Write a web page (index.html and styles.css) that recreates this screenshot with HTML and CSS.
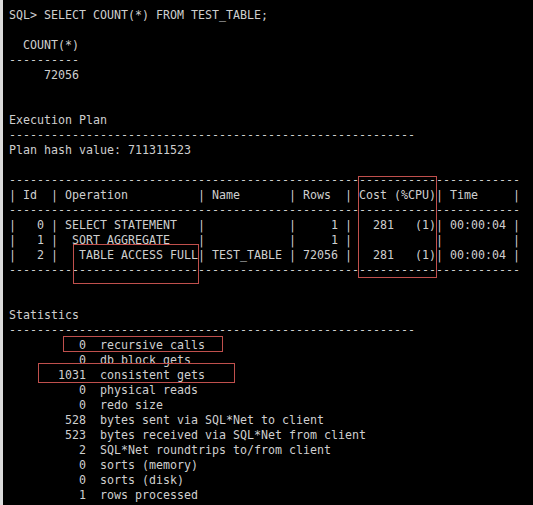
FILE: index.html
```html
<!DOCTYPE html>
<html>
<head>
<meta charset="utf-8">
<link rel="stylesheet" href="styles.css">
</head>
<body>
<div class="term">
<pre class="out">SQL&gt; SELECT COUNT(*) FROM TEST_TABLE;

  COUNT(*)
----------
     72056


Execution Plan
----------------------------------------------------------
Plan hash value: 711311523

-------------------------------------------------------------------------
| Id  | Operation          | Name       | Rows  | Cost (%CPU)| Time     |
-------------------------------------------------------------------------
|   0 | SELECT STATEMENT   |            |     1 |   281   (1)| 00:00:04 |
|   1 |  SORT AGGREGATE    |            |     1 |            |          |
|   2 |   TABLE ACCESS FULL| TEST_TABLE | 72056 |   281   (1)| 00:00:04 |
-------------------------------------------------------------------------


Statistics
----------------------------------------------------------
          0  recursive calls
          0  db block gets
       1031  consistent gets
          0  physical reads
          0  redo size
        528  bytes sent via SQL*Net to client
        523  bytes received via SQL*Net from client
          2  SQL*Net roundtrips to/from client
          0  sorts (memory)
          0  sorts (disk)
          1  rows processed</pre>
<div class="mark mark-full"></div>
<div class="mark mark-cost"></div>
<div class="mark mark-rec"></div>
<div class="mark mark-cons"></div>
</div>
</body>
</html>
```
FILE: styles.css
```css
html, body {
  margin: 0;
  padding: 0;
  background: #000;
}
.term {
  position: relative;
  width: 530px;
  height: 505px;
  background: #000;
  border-left: 3px solid #dcdcdc;
  overflow: hidden;
}
.out {
  margin: 0;
  padding: 8px 0 0 6px;
  font-family: "DejaVu Sans Mono", monospace;
  font-size: 11.63px;
  line-height: 15px;
  color: #cfcfcf;
  white-space: pre;
}
.mark {
  position: absolute;
  border: 1px solid #c0504d;
  box-sizing: border-box;
}
.mark-full { left: 70px; top: 244px; width: 126px; height: 40px; }
.mark-cost { left: 355px; top: 176px; width: 79px; height: 102px; }
.mark-rec  { left: 60px; top: 336px; width: 160px; height: 16px; }
.mark-cons { left: 35px; top: 363px; width: 197px; height: 20px; }
```
